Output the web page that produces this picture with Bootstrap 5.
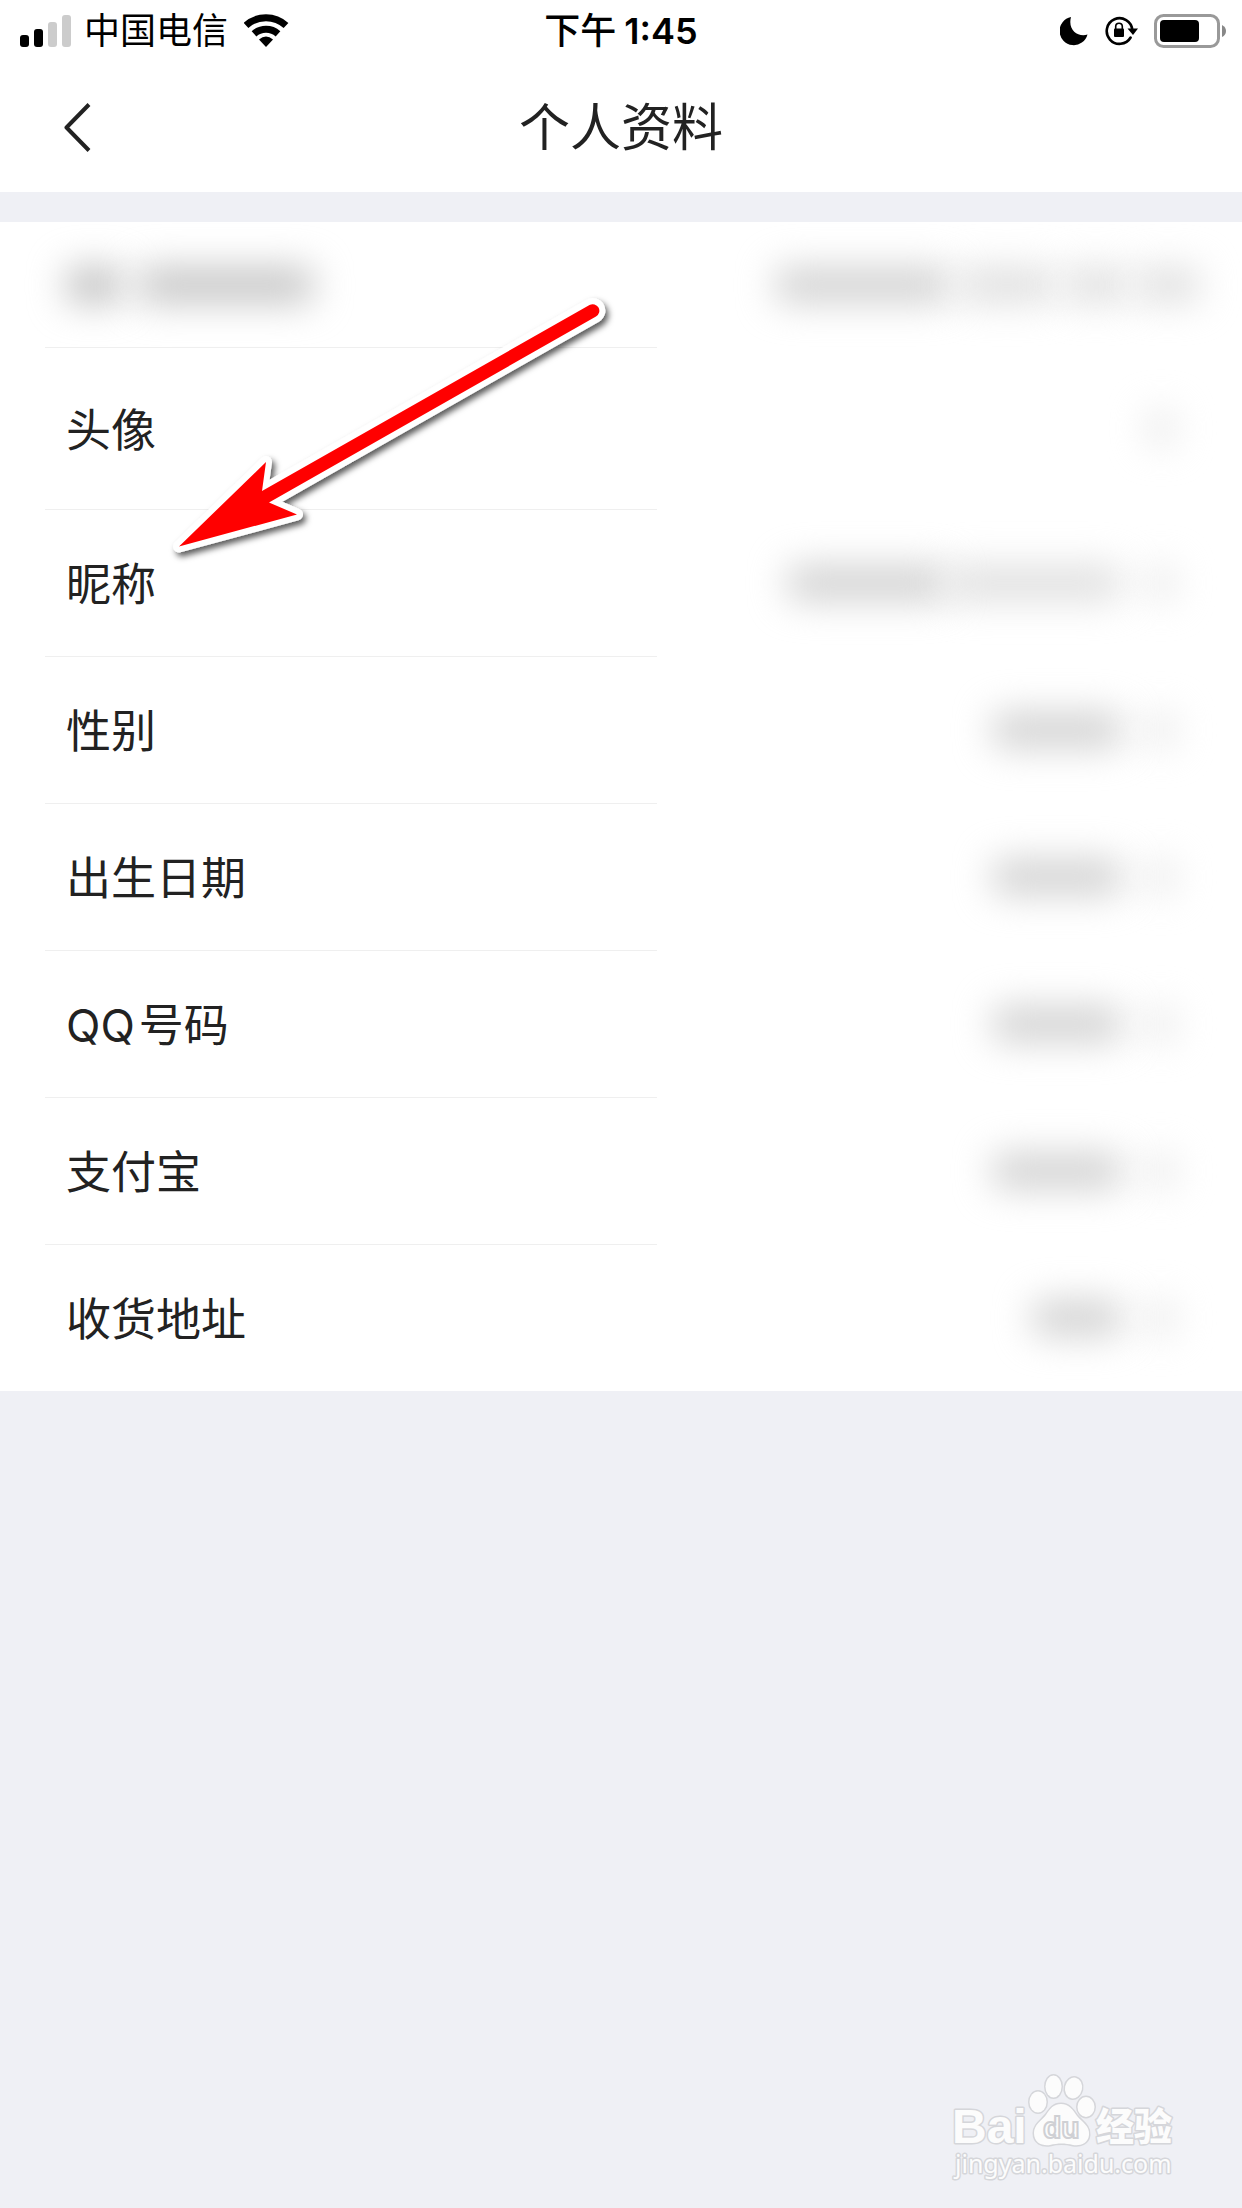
<!DOCTYPE html>
<html lang="zh-CN">
<head>
<meta charset="utf-8">
<meta name="viewport" content="width=device-width, initial-scale=1">
<title>个人资料</title>
<link href="https://cdn.jsdelivr.net/npm/bootstrap@5.3.0/dist/css/bootstrap.min.css" rel="stylesheet">
<style>
  body { background: #eff0f5; color: #222; font-family: Inter, "Noto Sans CJK SC", sans-serif; font-size: 45px; line-height: 60px; min-height: 100vh; }
  .status-bar { height: 62px; padding: 0 16px; font-size: 36px; line-height: 48px; color: #000; }
  .status-side { flex: 1 1 0; }
  .status-time { font-weight: 500; gap: 8px; }
  .status-clock { font-weight: 600; }
  .title-bar { height: 130px; padding: 0 52px; }
  .title-side { flex: 1 1 0; }
  .title-text { font-size: 51px; line-height: 64px; font-weight: 400; padding-top: 2px; }
  .back-btn { padding: 8px 12px; line-height: 1; border: 0; }
  .profile-list { margin-top: 30px; }
  .profile-row { height: 147px; color: #222; padding-right: 42px; }
  .row-id { height: 125px; }
  .row-avatar { height: 162px; }
  .row-name { width: 51%; margin-left: 45px; padding: 4px 0 0 21px; border-top: 1px solid #efefef; }
  .row-id .row-name { border-top-color: transparent; padding-top: 0; }
  .smudge { height: 36px; filter: blur(18px); background: #d2d2d2; border-radius: 12px; }
  .smudge-lite { background: #e0e0e0; }
  .smudge-id { width: 56px; background: #c0c0c0; }
  .smudge-user { width: 176px; background: #c6c6c6; }
  .smudge-long { width: 175px; }
  .smudge-mid { width: 160px; }
  .smudge-part { width: 98px; }
  .smudge-value { width: 130px; }
  .smudge-short { width: 90px; }
  .smudge-day { width: 64px; }
  .smudge-arrow { width: 28px; margin: 0 25px; background: #e8e8e8; }
  .pointer { left: 160px; top: 60px; pointer-events: none; }
  .site-mark { right: 60px; bottom: 20px; pointer-events: none; }
</style>
<script src="https://cdn.jsdelivr.net/npm/bootstrap@5.3.0/dist/js/bootstrap.bundle.min.js"></script>
</head>
<body class="position-relative">
<header class="bg-white">
  <div class="status-bar d-flex align-items-center">
    <div class="status-side d-flex align-items-center">
      <svg width="56" height="34" viewBox="-4 0 56 34" aria-hidden="true">
        <rect x="0" y="21" width="9" height="12" rx="3"/><rect x="14" y="15" width="9" height="18" rx="3"/>
        <rect x="28" y="8" width="9" height="25" rx="3" fill="#ccc"/><rect x="42" y="1" width="9" height="32" rx="3" fill="#ccc"/>
      </svg>
      <span class="ms-2 ps-1">中国电信</span>
      <svg class="ms-3" width="46" height="36" viewBox="1 1 46 36" aria-hidden="true">
        <g fill="none" stroke="#000" stroke-width="7"><path d="M3 13.500a29.500 29.500 0 0 1 40 0"/><path d="M11 21.800a18 18 0 0 1 24 0"/></g>
        <path d="M16 27.500Q23 21.500 30 27.500L23 35Z"/>
      </svg>
    </div>
    <div class="status-time d-flex"><span>下午</span><span class="status-clock">1:45</span></div>
    <div class="status-side d-flex align-items-center justify-content-end">
      <svg width="28" height="30" viewBox="0 0 28 30" aria-hidden="true"><path d="M11 1A14.200 14.200 0 1 0 27.500 18.500C18 21.500 7.500 14 11 1Z"/></svg>
      <svg class="ms-3" width="34" height="30" viewBox="0 0 34 30" aria-hidden="true">
        <path d="M26.600 21.500A12.800 12.800 0 1 1 28.300 14" fill="none" stroke="#000" stroke-width="2.600" stroke-linecap="round"/>
        <path d="M23.500 12.500H34L29 19Z"/><rect x="10" y="12.500" width="10" height="8.500" rx="1"/>
        <path d="M11.700 13.500v-3a3.300 3.300 0 0 1 6.600 0v3" fill="none" stroke="#000" stroke-width="1.600"/>
      </svg>
      <svg class="ms-3" width="72" height="34" viewBox="0 0 72 34" aria-hidden="true">
        <rect x="1.500" y="1.500" width="63" height="31" rx="8" fill="none" stroke="#999" stroke-width="3"/>
        <rect x="6" y="6" width="39" height="22" rx="4"/><path d="M68 11Q72 13 72 17T68 23Z" fill="#888"/>
      </svg>
    </div>
  </div>
  <div class="title-bar d-flex align-items-center">
    <div class="title-side d-flex">
      <button class="back-btn bg-transparent d-flex" type="button" aria-label="返回">
        <svg width="28" height="50" viewBox="0 0 28 50"><path d="M25 2.500L2.500 25.500L25 48.500" fill="none" stroke="#222" stroke-width="4" stroke-linejoin="round"/></svg>
      </button>
    </div>
    <h1 class="title-text m-0">个人资料</h1>
    <div class="title-side"></div>
  </div>
</header>

<main class="profile-list bg-white position-relative">
  <div class="profile-row row-id d-flex">
    <div class="row-name d-flex align-items-center gap-3"><span class="smudge smudge-id"></span><span class="smudge smudge-user"></span></div>
    <div class="ms-auto d-flex align-items-center gap-2"><span class="smudge smudge-long"></span><span class="smudge smudge-lite smudge-part"></span><span class="smudge smudge-lite smudge-day"></span><span class="smudge smudge-lite smudge-day"></span></div>
  </div>
  <a href="#avatar" class="profile-row row-avatar d-flex text-decoration-none">
    <div class="row-name d-flex align-items-center">头像</div>
    <div class="ms-auto d-flex align-items-center"><span class="smudge smudge-arrow"></span></div>
  </a>
  <a href="#nickname" class="profile-row d-flex text-decoration-none">
    <div class="row-name d-flex align-items-center">昵称</div>
    <div class="ms-auto d-flex align-items-center"><span class="smudge smudge-mid"></span><span class="smudge smudge-lite smudge-long"></span><span class="smudge smudge-arrow"></span></div>
  </a>
  <a href="#gender" class="profile-row d-flex text-decoration-none">
    <div class="row-name d-flex align-items-center">性别</div>
    <div class="ms-auto d-flex align-items-center"><span class="smudge smudge-value"></span><span class="smudge smudge-arrow"></span></div>
  </a>
  <a href="#birthday" class="profile-row d-flex text-decoration-none">
    <div class="row-name d-flex align-items-center">出生日期</div>
    <div class="ms-auto d-flex align-items-center"><span class="smudge smudge-value"></span><span class="smudge smudge-arrow"></span></div>
  </a>
  <a href="#qq" class="profile-row d-flex text-decoration-none">
    <div class="row-name d-flex align-items-center gap-1"><span>QQ</span><span>号码</span></div>
    <div class="ms-auto d-flex align-items-center"><span class="smudge smudge-value"></span><span class="smudge smudge-arrow"></span></div>
  </a>
  <a href="#alipay" class="profile-row d-flex text-decoration-none">
    <div class="row-name d-flex align-items-center">支付宝</div>
    <div class="ms-auto d-flex align-items-center"><span class="smudge smudge-value"></span><span class="smudge smudge-arrow"></span></div>
  </a>
  <a href="#address" class="profile-row d-flex text-decoration-none">
    <div class="row-name d-flex align-items-center">收货地址</div>
    <div class="ms-auto d-flex align-items-center"><span class="smudge smudge-short"></span><span class="smudge smudge-arrow"></span></div>
  </a>
  <!-- red pointer to the nickname row -->
  <svg class="pointer position-absolute" width="470" height="290" viewBox="160 282 470 290" aria-hidden="true">
    <defs><filter id="drop" x="-10%" y="-10%" width="120%" height="120%"><feDropShadow dx="3" dy="4" stdDeviation="3" flood-color="#000" flood-opacity=".65"/></filter>
    <path id="arrow" d="M179 546.500L266 462L262 491L589.500 305A6.500 6.500 0 0 1 596 316.500L269 502.500L297 514.500Z"/></defs>
    <use href="#arrow" fill="#fff" stroke="#fff" stroke-width="12" stroke-linejoin="round" filter="url(#drop)"/>
    <use href="#arrow" fill="#f00"/>
  </svg>
</main>

<svg class="site-mark position-absolute" width="232" height="120" viewBox="950 2068 232 120" role="img" aria-label="Baidu 经验">
  <g fill="#fcfcfc" stroke="#d5d6da" stroke-width="3" stroke-linejoin="round" paint-order="stroke">
    <text x="952" y="2143" font-family="Liberation Sans, sans-serif" font-weight="700" font-size="48">Bai</text>
    <ellipse cx="1038" cy="2102" rx="8.500" ry="10.500"/><ellipse cx="1053.500" cy="2086.500" rx="8" ry="11"/>
    <ellipse cx="1073.500" cy="2088" rx="8.500" ry="10.500" transform="rotate(12 1073.500 2088)"/><ellipse cx="1086" cy="2107" rx="8.500" ry="10"/>
    <path d="M1061 2104C1069 2104 1073 2110 1077 2116C1082 2122 1090 2126 1089 2135C1088 2144 1080 2146 1073 2145C1065 2143 1058 2143 1050 2145C1042 2146 1034 2143 1034 2133C1034 2125 1041 2121 1046 2115C1050 2109 1053 2104 1061 2104Z"/>
    <text x="1096" y="2140" font-family="Noto Sans CJK SC, sans-serif" font-weight="900" font-size="38">经验</text>
    <text x="955" y="2173" font-family="Noto Sans, sans-serif" font-size="25">jingyan.baidu.com</text>
  </g>
  <text x="1043" y="2138" fill="#fcfcfc" stroke="#cfd0d4" stroke-width="2" font-family="Liberation Sans, sans-serif" font-weight="700" font-size="30">du</text>
</svg>
</body>
</html>
